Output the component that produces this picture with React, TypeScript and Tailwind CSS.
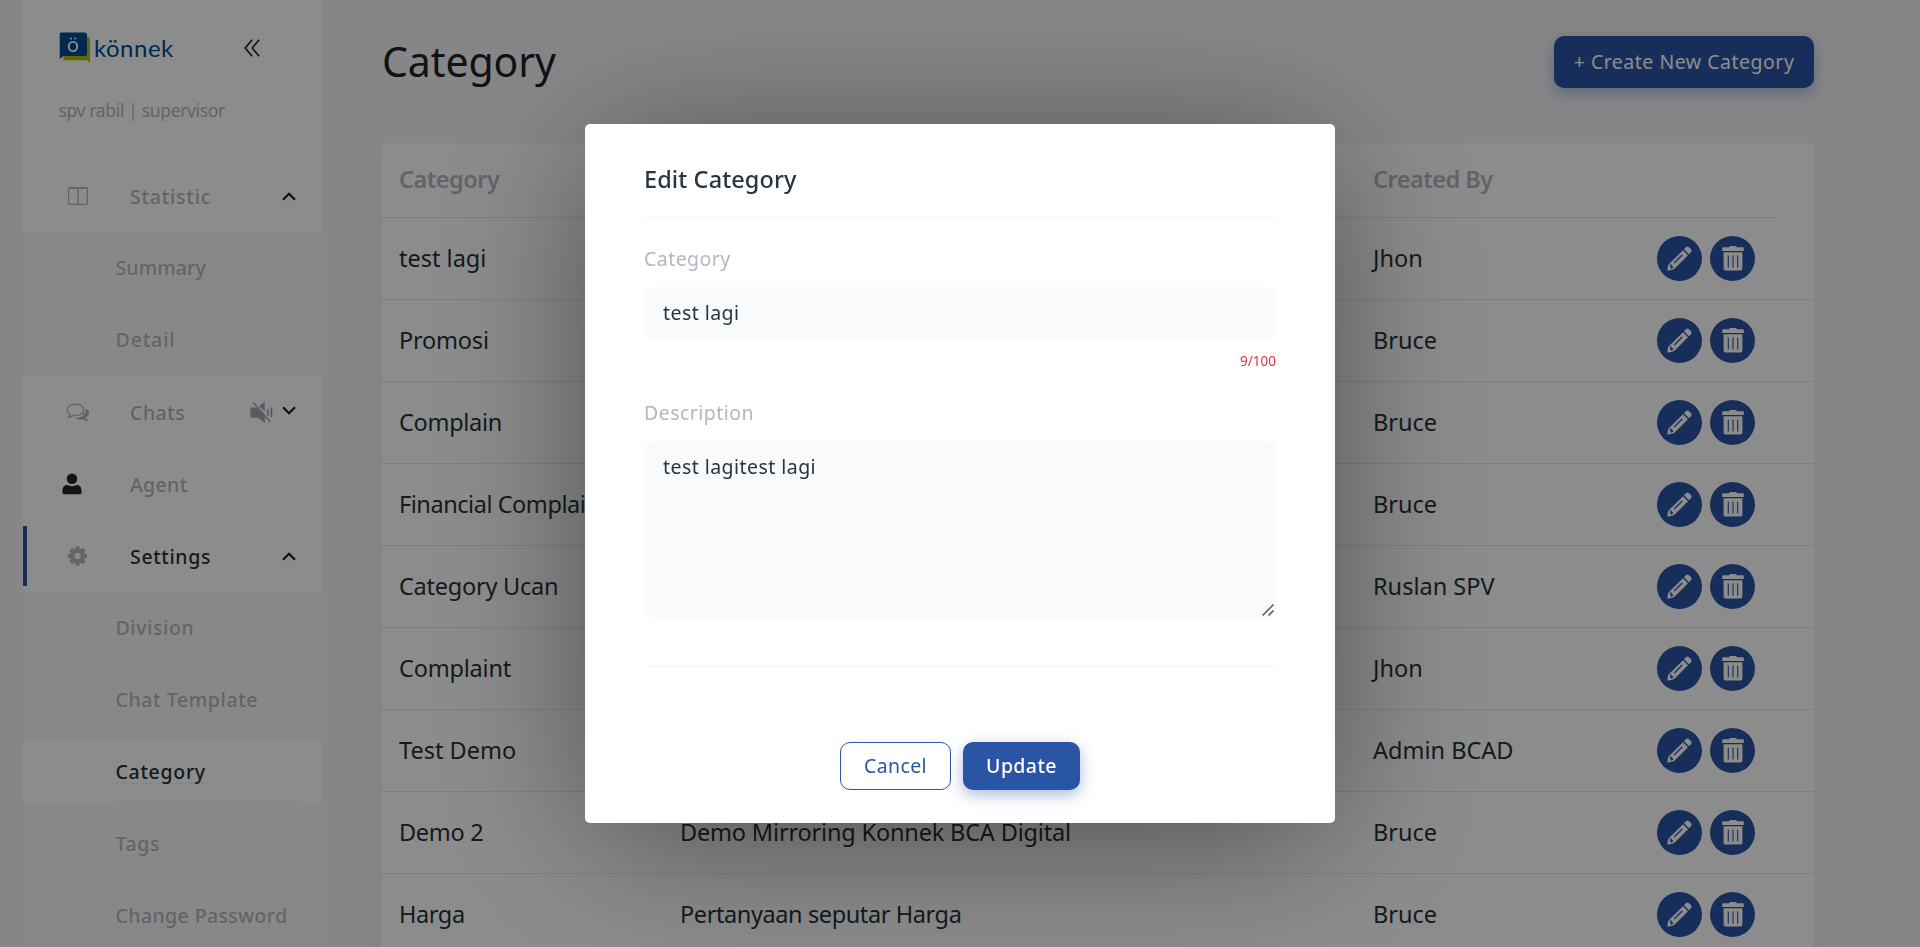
import React from "react";

type IconProps = { className?: string };

const LogoMark = () => (
  <svg className="h-[32px] w-[32px] shrink-0" viewBox="0 0 32 32">
    <path d="M5 5h24.500q1.500 0 1.500 1.500V31l-3.500-2.800H4.500z" fill="#b5bd00" />
    <path d="M2 .5h24q2 0 2 2V22q0 2-2 2H4.500L.7 27V2q0-1.500 1.300-1.500z" fill="#004b93" />
    <ellipse cx="14" cy="14.500" rx="4.200" ry="4.600" fill="none" stroke="#fff" strokeWidth="1.900" />
    <circle cx="11.900" cy="6.500" r="1.100" fill="#fff" />
    <circle cx="16.300" cy="6.500" r="1.100" fill="#fff" />
  </svg>
);

const DoubleChevron = ({ className }: IconProps) => (
  <svg className={className} viewBox="0 0 16 18" fill="none" stroke="currentColor" strokeWidth="1.700">
    <path d="M8.200 .8L1.200 9l7 8.200M15.200 .8l-7 8.200 7 8.200" />
  </svg>
);

const Columns = ({ className }: IconProps) => (
  <svg className={className} viewBox="0 0 20 18" fill="none" stroke="currentColor">
    <rect x=".6" y=".6" width="18.800" height="16.800" rx="1.200" strokeWidth="1.200" />
    <path d="M.6 1.300h18.800M10 1v16.500" strokeWidth="1.400" />
  </svg>
);

const Comments = ({ className }: IconProps) => (
  <svg className={className} viewBox="0 0 23 19">
    <path
      d="M9 1.200c4.700 0 8.300 2.500 8.300 5.700s-3.600 5.800-8.300 5.800c-.9 0-1.700-.1-2.500-.3-1.200.9-2.600 1.700-4.400 1.900.8-.9 1.300-1.700 1.500-2.900C1.800 10.300.7 8.700.7 6.900.700 3.700 4.300 1.200 9 1.200z"
      fill="none"
      stroke="currentColor"
      strokeWidth="1.300"
    />
    <path
      d="M19 5.200c2.200 1.100 3.500 2.800 3.500 4.700 0 1.800-1.100 3.300-2.900 4.400.2 1.300.8 2.200 1.900 3.300.3.400 0 .7-.4.700-2-.3-3.600-1-4.900-2-3 .5-5.900 0-8-1.300 6.300-.1 11-3.500 11-8.100 0-.6 0-1.100-.2-1.700z"
      fill="currentColor"
    />
  </svg>
);

const Muted = ({ className }: IconProps) => (
  <svg className={className} viewBox="0 0 23 23" fill="currentColor">
    <path d="M9 5.300L14.800.5v9.900zM1.500 6.500h4.800l8.500 8.600v7.100l-6.600-5.400H1.500q-1.200 0-1.200-1.200V7.700q0-1.200 1.200-1.200z" />
    <path d="M3.200 1.400L20.300 21" stroke="currentColor" strokeWidth="1.500" fill="none" />
    <path d="M17.800 8.400v6.300M21.400 6.400v9.500" stroke="currentColor" strokeWidth="1.700" fill="none" />
  </svg>
);

const Person = ({ className }: IconProps) => (
  <svg className={className} viewBox="0 0 20 22" fill="currentColor">
    <circle cx="10" cy="5.700" r="5.300" />
    <path d="M5 12c3 1.500 7 1.500 10 0 3 0 4.500 2.500 4.500 5.500v2.300q0 1.400-1.400 1.400H1.900Q.5 21.200.5 19.800v-2.300C.5 14.500 2 12 5 12z" />
  </svg>
);

const Gear = ({ className }: IconProps) => (
  <svg className={className} viewBox="-10 -10 20 20">
    <circle r="5.300" fill="none" stroke="currentColor" strokeWidth="4.200" />
    {[0, 45, 90, 135].map((a) => (
      <path key={a} d="M-2 -9.500h4l.6 3.500h-5.200zM-2 9.500h4l.6-3.500h-5.200z" transform={`rotate(${a})`} fill="currentColor" />
    ))}
  </svg>
);

const Chevron = ({ up }: { up?: boolean }) => (
  <svg className={up ? "h-[9px] w-[14px]" : "h-[9px] w-[14px] -translate-y-[2px] rotate-180"} viewBox="0 0 14 9" fill="none" stroke="currentColor" strokeWidth="2.200">
    <path d="M1 7.800L7 1.700l6 6.100" />
  </svg>
);

const Pencil = () => (
  <svg className="h-[25px] w-[25px]" viewBox="0 0 25 25">
    <path d="M16 4.200L21 9.300 8.500 21.800Q6 24.500.3 24.500.4 19.500 2.500 17.500z" fill="#fff" />
    <path d="M17 3.200l2-2q1.600-1.500 3.300.2l1.600 1.700q1.500 1.600 0 3.200l-2 2z" fill="#fff" />
    <path d="M7.200 17l8-8" stroke="#2a54a4" strokeWidth="1.200" />
    <path d="M3.800 18.500q0 2 2.200 2.600l-1.800 1.200q-1-1.800-.4-3.800z" fill="#2a54a4" stroke="#2a54a4" />
  </svg>
);

const Trash = () => (
  <svg className="h-[25px] w-[22px]" viewBox="0 0 22 25">
    <path d="M7.500 0h7v1.300H21q.8 0 .8.800v3H.2v-3q0-.8.800-.8h6.500z" fill="#fff" />
    <path d="M1.600 6.200h18.800v16.600q0 1.700-1.700 1.700H3.300q-1.700 0-1.700-1.700z" fill="#fff" />
    <path d="M6.300 9.500v12M11 9.500v12M15.700 9.500v12" stroke="#2a54a4" strokeWidth="1.100" />
  </svg>
);

function MenuItem({
  icon,
  label,
  className,
  active,
  right,
}: {
  icon: React.ReactNode;
  label: string;
  className: string;
  active?: boolean;
  right?: React.ReactNode;
}) {
  return (
    <div className="flex h-[72px] items-center">
      <div className={active ? "h-[60px] w-1 bg-[#2a54a4]" : "h-[60px] w-1"} />
      <div className="flex w-[103px] items-center pl-[35px] text-[#b5b5c3]">{icon}</div>
      <span className={`flex-1 whitespace-nowrap pt-px text-[19.500px] font-medium ${active ? "text-[#263238]" : "text-[#b5b5c3]"} ${className}`}>{label}</span>
      <div className="flex items-center pr-[26.500px] text-[#181c20]">{right}</div>
    </div>
  );
}

function SubMenu({ items }: { items: { label: string; className: string; active?: boolean }[] }) {
  return (
    <div className="flex flex-col gap-3 bg-[#f8f8f8] py-1.5">
      {items.map((i) => (
        <div key={i.label} className={i.active ? "-mr-px flex h-[60px] bg-white pl-[92.500px] pr-[25px]" : "flex h-[60px] pl-[92.500px] pr-6"}>
          <div className="flex flex-1 items-center border-b border-[#f4f4f4]">
            <span className={`h-[24px] whitespace-nowrap border-b border-[#f4f4f4] text-[19.500px] leading-[24px] font-medium ${i.active ? "text-[#263238]" : "text-[#b5b5c3]"} ${i.className}`}>
              {i.label}
            </span>
          </div>
        </div>
      ))}
    </div>
  );
}

const rows = [
  ["test lagi", "", "Jhon", "tracking-normal"],
  ["Promosi", "", "Bruce", "tracking-[-0.200px]"],
  ["Complain", "", "Bruce", "tracking-[-0.300px]"],
  ["Financial Complain", "", "Bruce", "tracking-[-0.450px]"],
  ["Category Ucan", "", "Ruslan SPV", "tracking-[-0.250px]"],
  ["Complaint", "", "Jhon", "tracking-[-0.200px]"],
  ["Test Demo", "", "Admin BCAD", "tracking-normal"],
  ["Demo 2", "Demo Mirroring Konnek BCA Digital", "Bruce", "tracking-[-0.300px]"],
  ["Harga", "Pertanyaan seputar Harga", "Bruce", "tracking-[-0.400px]"],
];

function Sidebar() {
  return (
    <aside className="ml-[23px] h-[947px] w-[300px] shrink-0 overflow-hidden bg-white">
      <div className="flex items-center pt-8 pl-9">
        <LogoMark />
        <span className="ml-[3px] w-[150px] font-[Lato,sans-serif] text-[24px] leading-[30px] tracking-[0.500px] text-[#004b93]">könnek</span>
        <DoubleChevron className="h-[18px] w-4 text-[#222]" />
      </div>
      <div className="flex h-24 items-center pb-[3px] pl-[35.500px] text-[17.500px] tracking-[-0.350px] text-[#b5b5c3]">spv rabil | supervisor</div>
      <nav className="border-r border-[#eeeeee]">
        <MenuItem icon={<Columns className="h-[18px] w-5 translate-x-[6px]" />} label="Statistic" className="tracking-[0.800px]" right={<Chevron up />} />
        <SubMenu
          items={[
            { label: "Summary", className: "tracking-[0.100px]" },
            { label: "Detail", className: "tracking-[0.900px]" },
          ]}
        />
        <MenuItem
          icon={<Comments className="h-[19px] w-[23px] translate-x-[4.500px]" />}
          label="Chats"
          className="tracking-[0.500px]"
          right={
            <>
              <Muted className="mr-[9px] h-[23px] w-[23px] text-[#a5a5b5]" />
              <Chevron />
            </>
          }
        />
        <MenuItem icon={<Person className="h-[22px] w-5 text-[#212529]" />} label="Agent" className="tracking-[0.350px]" />
        <MenuItem icon={<Gear className="h-5 w-5 translate-x-[5.500px]" />} label="Settings" className="tracking-[0.650px]" active right={<Chevron up />} />
        <SubMenu
          items={[
            { label: "Division", className: "tracking-[0.600px]" },
            { label: "Chat Template", className: "tracking-[0.600px]" },
            { label: "Category", className: "tracking-[0.700px]", active: true },
            { label: "Tags", className: "tracking-[0.600px]" },
            { label: "Change Password", className: "tracking-[0.400px]" },
          ]}
        />
      </nav>
    </aside>
  );
}

function CategoryTable() {
  return (
    <section className="mt-[55px] rounded-md bg-white text-[23.500px] text-[#263238] shadow-[0_20px_27px_rgba(42,84,164,0.06)]">
      <div className="flex h-[75px] pr-9">
        <div className="flex flex-1 items-center border-b border-[#e6e6e6] pl-[18px] font-semibold text-[#b5b5c3]">
          <span className="w-[974px] tracking-[-0.500px]">Category</span>
          <span className="tracking-[-0.500px]">Created By</span>
        </div>
      </div>
      {rows.map(([name, desc, by, tracking]) => (
        <div key={name} className="flex h-[82px] items-center border-b border-[#e6e6e6] pl-[18px] whitespace-nowrap">
          <span className={`w-[281px] ${tracking}`}>{name}</span>
          <span className={`w-[693px] ${name === "Demo 2" ? "tracking-[-0.170px]" : "tracking-[-0.400px]"}`}>{desc}</span>
          <span className="w-[284px]">{by}</span>
          <div className="flex gap-2">
            <button className="flex h-[45px] w-[45px] items-center justify-center rounded-full bg-[#2a54a4]">
              <Pencil />
            </button>
            <button className="flex h-[45px] w-[45px] items-center justify-center rounded-full bg-[#2a54a4]">
              <Trash />
            </button>
          </div>
        </div>
      ))}
    </section>
  );
}

function EditDialog() {
  return (
    <div className="fixed inset-0 flex items-start justify-center bg-black/45 pt-[124px]">
      <div className="flex h-[699px] w-[750px] flex-col rounded-[5px] bg-white pr-[58px] pl-[59px] text-[19.500px] tracking-[0.450px] text-[#263740] shadow-[0_18px_150px_-12px_rgba(0,0,0,0.48)]">
        <h2 className="flex h-[94px] items-center border-b border-[#f5f5f5] pt-[18px] text-[23.500px] font-medium tracking-[0.100px]">Edit Category</h2>
        <label className="mt-[26px] h-[30px] leading-[30px] text-[#b5b5c3]">Category</label>
        <input className="mt-[13px] h-[52px] rounded-xl bg-[#f9fafc] px-[19px] pb-[2px] tracking-[0.450px]" defaultValue="test lagi" />
        <div className="mt-[12px] pr-px text-right text-[13.500px] leading-[20px] tracking-normal text-[#dc3545]">9/100</div>
        <label className="mt-[27px] h-[30px] leading-[30px] text-[#b5b5c3]">Description</label>
        <div className="relative mt-[13px] h-[177px] shrink-0">
          <textarea
            className="block h-full w-full resize-none rounded-xl bg-[#f9fafc] px-[19px] py-[11px] leading-[30px] tracking-[0.450px]"
            defaultValue="test lagitest lagi"
          />
          <svg className="absolute right-[3px] bottom-[2px] h-3 w-3" viewBox="0 0 12 12" stroke="#555" strokeWidth="1.500">
            <path d="M.5 11.500l11-11M6.500 11.500l5-5" />
          </svg>
        </div>
        <div className="mt-[48px] border-t border-[#f7f7f7]" />
        <div className="mt-[75px] flex justify-center gap-3 pr-px tracking-[0.400px]">
          <button className="h-[48px] w-[111px] rounded-[10px] border border-[#2a54a4] text-[#2a54a4]">Cancel</button>
          <button className="h-[48px] w-[117px] rounded-[10px] bg-[#2a54a4] font-medium text-white shadow-[0_5px_15px_rgba(42,84,164,0.4)]">Update</button>
        </div>
      </div>
    </div>
  );
}

export default function App() {
  return (
    <div className="flex h-[947px] overflow-hidden bg-[#f5f5f9] font-['Noto_Sans',sans-serif]">
      <Sidebar />
      <main className="ml-[58px] w-[1433px] shrink-0 pt-9">
        <header className="flex h-[52px] items-center justify-between">
          <h1 className="pl-px text-[41px] tracking-[-0.100px] text-[#212121]">Category</h1>
          <button className="h-[52px] w-[260px] rounded-[10px] bg-[#2a54a4] text-[19.500px] tracking-[0.500px] whitespace-nowrap text-white shadow-[0_5px_15px_rgba(42,84,164,0.4)]">
            + Create New Category
          </button>
        </header>
        <CategoryTable />
      </main>
      <EditDialog />
    </div>
  );
}
